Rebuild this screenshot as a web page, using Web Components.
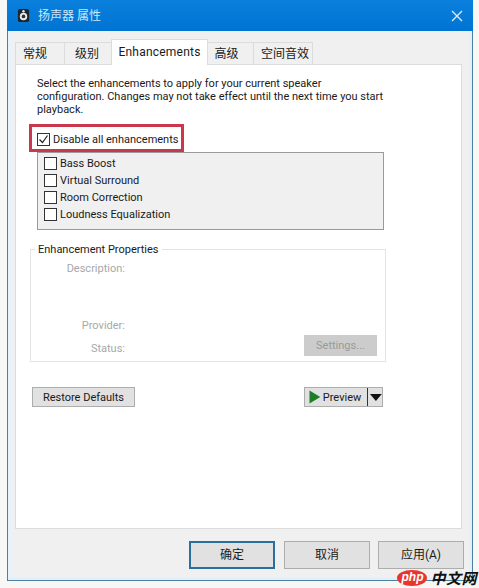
<!DOCTYPE html>
<html lang="zh">
<head>
<meta charset="utf-8">
<title>扬声器 属性</title>
<style>
	html, body { margin: 0; padding: 0; background: #f7f7f5; }
	body {
		width: 479px;
		height: 588px;
		overflow: hidden;
		position: relative;
		font: 11px/13px Roboto, "Noto Sans CJK SC", sans-serif;
		color: #1a1a1a;
	}
</style>
</head>
<body>
<dlg-window caption="扬声器 属性">
	<tab-strip slot="tabs" active="2" labels="常规,级别,Enhancements,高级,空间音效"></tab-strip>
	<enhancement-page></enhancement-page>
	<dlg-button slot="footer" default>确定</dlg-button>
	<dlg-button slot="footer">取消</dlg-button>
	<dlg-button slot="footer">应用(A)</dlg-button>
</dlg-window>
<php-mark></php-mark>

<script>
// dialog frame: title bar, tabs, page, footer
class DlgWindow extends HTMLElement {
	constructor() {
		super();
		this.attachShadow({ mode: "open" });
		this.shadowRoot.innerHTML = `
			<style>
				:host {
					display: flex;
					flex-direction: column;
					box-sizing: border-box;
					width: 466px;
					height: 581px;
					margin-left: 7px;
					border: 1px solid #0078d7;
					border-width: 0 1px 1px 1px;
					border-color: #4f7f9f;
					background: #f0f0f0;
				}
				.title {
					flex: none;
					display: flex;
					align-items: center;
					gap: 8px;
					height: 31px;
					padding-left: 10px;
					margin: 0 -1px;
					background: linear-gradient(#0a7fdc, #0074d2);
					color: #cfe6f8;
					font-size: 12px;
				}
				.title span { flex: 1; padding-top: 2px; }
				.close { width: 32px; display: flex; justify-content: center; }
				.body {
					flex: 1;
					display: flex;
					flex-direction: column;
					min-height: 0;
					padding: 9px 8px 0 7px;
					border: solid #e2f0fb;
					border-width: 0 3px 3px 0;
					background: linear-gradient(90deg, #e6f3fc 0, #f0f0f0 6px);
				}
				.page {
					box-sizing: border-box;
					height: 465px;
					width: 447px;
					background: #fff;
					border: 1px solid #dcdcdc;
				}
				.footer {
					display: flex;
					justify-content: flex-end;
					gap: 8px;
					padding: 12px 0 0;
					margin-right: -3px;
				}
			</style>
			<div class="title">
				<svg width="13" height="15" viewBox="0 0 14 16">
					<rect x="1" y="1" width="12" height="14" rx="2" fill="#20242b"/>
					<circle cx="7" cy="9" r="4" fill="#e8eef2"/>
					<circle cx="7" cy="9" r="2" fill="#30343a"/>
					<circle cx="7" cy="3.5" r="1.3" fill="#e8eef2"/>
				</svg>
				<span></span>
				<div class="close">
					<svg width="12" height="12" viewBox="0 0 12 12"><path d="M1 1l10 10M11 1L1 11" stroke="#d9ecfb" stroke-width="1.4" fill="none"/></svg>
				</div>
			</div>
			<div class="body">
				<slot name="tabs"></slot>
				<div class="page"><slot></slot></div>
				<div class="footer"><slot name="footer"></slot></div>
			</div>
		`;
	}
	connectedCallback() {
		this.shadowRoot.querySelector(".title span").textContent = this.getAttribute("caption");
	}
}
customElements.define("dlg-window", DlgWindow);

class TabStrip extends HTMLElement {
	constructor() {
		super();
		this.attachShadow({ mode: "open" });
		this.shadowRoot.innerHTML = `
			<style>
				:host { display: flex; align-items: flex-end; height: 25px; margin-bottom: -1px; position: relative; z-index: 1; }
				div {
					box-sizing: border-box;
					height: 22px;
					margin-bottom: 1px;
					padding-top: 5px;
					text-align: center;
					background: #f0f0f0;
					border: 1px solid #dcdcdc;
					border-bottom: none;
					margin-right: -1px;
					font-size: 12px;
				}
				div.on { height: 26px; margin-bottom: 0; padding-top: 6px; background: #fff; position: relative; letter-spacing: 0.22px; }
			</style>
		`;
	}
	connectedCallback() {
		const widths = [50, 48, 97, 47, 60];
		// labels don't sit dead centre in the reference tabs
		const nudge = [10, 2, 0, 8, 0];
		const active = Number(this.getAttribute("active"));
		this.getAttribute("labels").split(",").forEach((label, i) => {
			const tab = document.createElement("div");
			tab.textContent = label;
			tab.style.width = widths[i] + "px";
			tab.style.paddingRight = nudge[i] + "px";
			if (i === 4) tab.style.paddingLeft = "4px";
			if (i === active) tab.className = "on";
			this.shadowRoot.appendChild(tab);
		});
	}
}
customElements.define("tab-strip", TabStrip);

class DlgCheck extends HTMLElement {
	constructor() {
		super();
		this.attachShadow({ mode: "open" });
		this.shadowRoot.innerHTML = `
			<style>
				:host { display: flex; align-items: center; gap: 3px; height: 17px; }
				i {
					box-sizing: border-box;
					width: 13px;
					height: 13px;
					border: 1px solid #333;
					background: #fff;
					display: block;
					flex: none;
				}
				svg { display: none; width: 11px; height: 11px; }
				:host([checked]) svg { display: block; }
			</style>
			<i><svg viewBox="0 0 11 11"><path d="M1.5 5.5l3 3 5-7" fill="none" stroke="#222" stroke-width="1.2"/></svg></i>
			<slot></slot>
		`;
	}
}
customElements.define("dlg-check", DlgCheck);

class DlgButton extends HTMLElement {
	constructor() {
		super();
		this.attachShadow({ mode: "open" });
		this.shadowRoot.innerHTML = `
			<style>
				:host {
					display: flex;
					align-items: center;
					justify-content: center;
					box-sizing: border-box;
					width: 86px;
					height: 28px;
					padding-top: 1px;
					background: #e1e1e1;
					border: 1px solid #adadad;
					font-size: 12px;
				}
				:host([default]) { border: 2px solid #2a6f9e; margin-right: 1px; }
			</style>
			<slot></slot>
		`;
	}
}
customElements.define("dlg-button", DlgButton);

// the Enhancements tab itself
class EnhancementPage extends HTMLElement {
	constructor() {
		super();
		this.attachShadow({ mode: "open" });
		this.shadowRoot.innerHTML = `
			<style>
				:host { display: block; padding: 12px 77px 0 21px; }
				p { margin: 0; white-space: nowrap; }
				.master { position: relative; box-sizing: border-box; margin-top: 13px; height: 23px; padding-top: 2px; }
				.mark {
					position: absolute;
					left: -8px;
					top: -5px;
					width: 155px;
					height: 28px;
					box-sizing: border-box;
					border: 3px solid #c9384c;
				}
				.list {
					box-sizing: border-box;
					width: 347px;
					height: 78px;
					padding: 2px 0 0 6px;
					background: #f0f0f0;
					border: 1px solid #9a9a9a;
				}
				fieldset {
					box-sizing: border-box;
					width: 356px;
					height: 119px;
					margin: 13px 0 0 -7px;
					padding: 0;
					border: 1px solid #e3e3e3;
					position: relative;
					display: grid;
					grid-template-columns: 94px 1fr;
					grid-template-rows: 57px 23px 23px;
					color: #a8a8a8;
					align-content: start;
				}
				legend { margin-left: 4px; padding: 0 3px; color: #1a1a1a; }
				.k { text-align: right; padding-top: 6px; }
				.settings {
					position: absolute;
					right: 8px;
					bottom: 5px;
					width: 73px;
					height: 21px;
					background: #cccccc;
					color: #9a9a9a;
					display: flex;
					align-items: center;
					justify-content: center;
				}
				.actions {
					display: flex;
					justify-content: space-between;
					width: 351px;
					margin: 25px 0 0 -5px;
				}
				.btn {
					box-sizing: border-box;
					height: 20px;
					background: #e1e1e1;
					border: 1px solid #adadad;
					display: flex;
					align-items: center;
					justify-content: center;
				}
				.restore { width: 103px; }
				.preview { width: 79px; gap: 2px; justify-content: flex-start; padding-left: 4px; }
				.preview .sep { width: 1px; height: 18px; background: #333; margin-left: 4px; }
			</style>
			<p>Select the enhancements to apply for your current speaker<br>configuration. Changes may not take effect until the next time you start<br>playback.</p>
			<div class="master">
				<dlg-check checked>Disable all enhancements</dlg-check>
				<div class="mark"></div>
			</div>
			<div class="list">
				<dlg-check>Bass Boost</dlg-check>
				<dlg-check>Virtual Surround</dlg-check>
				<dlg-check>Room Correction</dlg-check>
				<dlg-check>Loudness Equalization</dlg-check>
			</div>
			<fieldset>
				<legend>Enhancement Properties</legend>
				<div class="k">Description:</div><div></div>
				<div class="k">Provider:</div><div></div>
				<div class="k">Status:</div><div></div>
				<div class="settings">Settings...</div>
			</fieldset>
			<div class="actions">
				<div class="btn restore">Restore Defaults</div>
				<div class="btn preview">
					<svg width="12" height="14" viewBox="0 0 12 14"><path d="M0.5 0.5L11.5 7L0.5 13.5Z" fill="#1c7f28"/></svg>
					<span>Preview</span>
					<span class="sep"></span>
					<svg width="12" height="7" viewBox="0 0 12 7"><path d="M0 0h12L6 7Z" fill="#111"/></svg>
				</div>
			</div>
		`;
	}
}
customElements.define("enhancement-page", EnhancementPage);

// site watermark sitting over the corner of the shot
class PhpMark extends HTMLElement {
	constructor() {
		super();
		this.attachShadow({ mode: "open" });
		this.shadowRoot.innerHTML = `
			<style>
				:host {
					position: absolute;
					right: 0;
					bottom: 1px;
					display: flex;
					align-items: center;
					gap: 3px;
					height: 18px;
					padding-right: 2px;
				}
				b {
					width: 30px;
					height: 16px;
					border-radius: 50%;
					background: #e8352e;
					color: #fff;
					font: italic 700 12px/15px "Liberation Sans", sans-serif;
					text-align: center;
				}
				span {
					font: italic 700 15px/18px "Noto Sans CJK SC", sans-serif;
					color: #111;
					letter-spacing: 0.5px;
				}
			</style>
			<b>php</b><span>中文网</span>
		`;
	}
}
customElements.define("php-mark", PhpMark);
</script>
</body>
</html>
